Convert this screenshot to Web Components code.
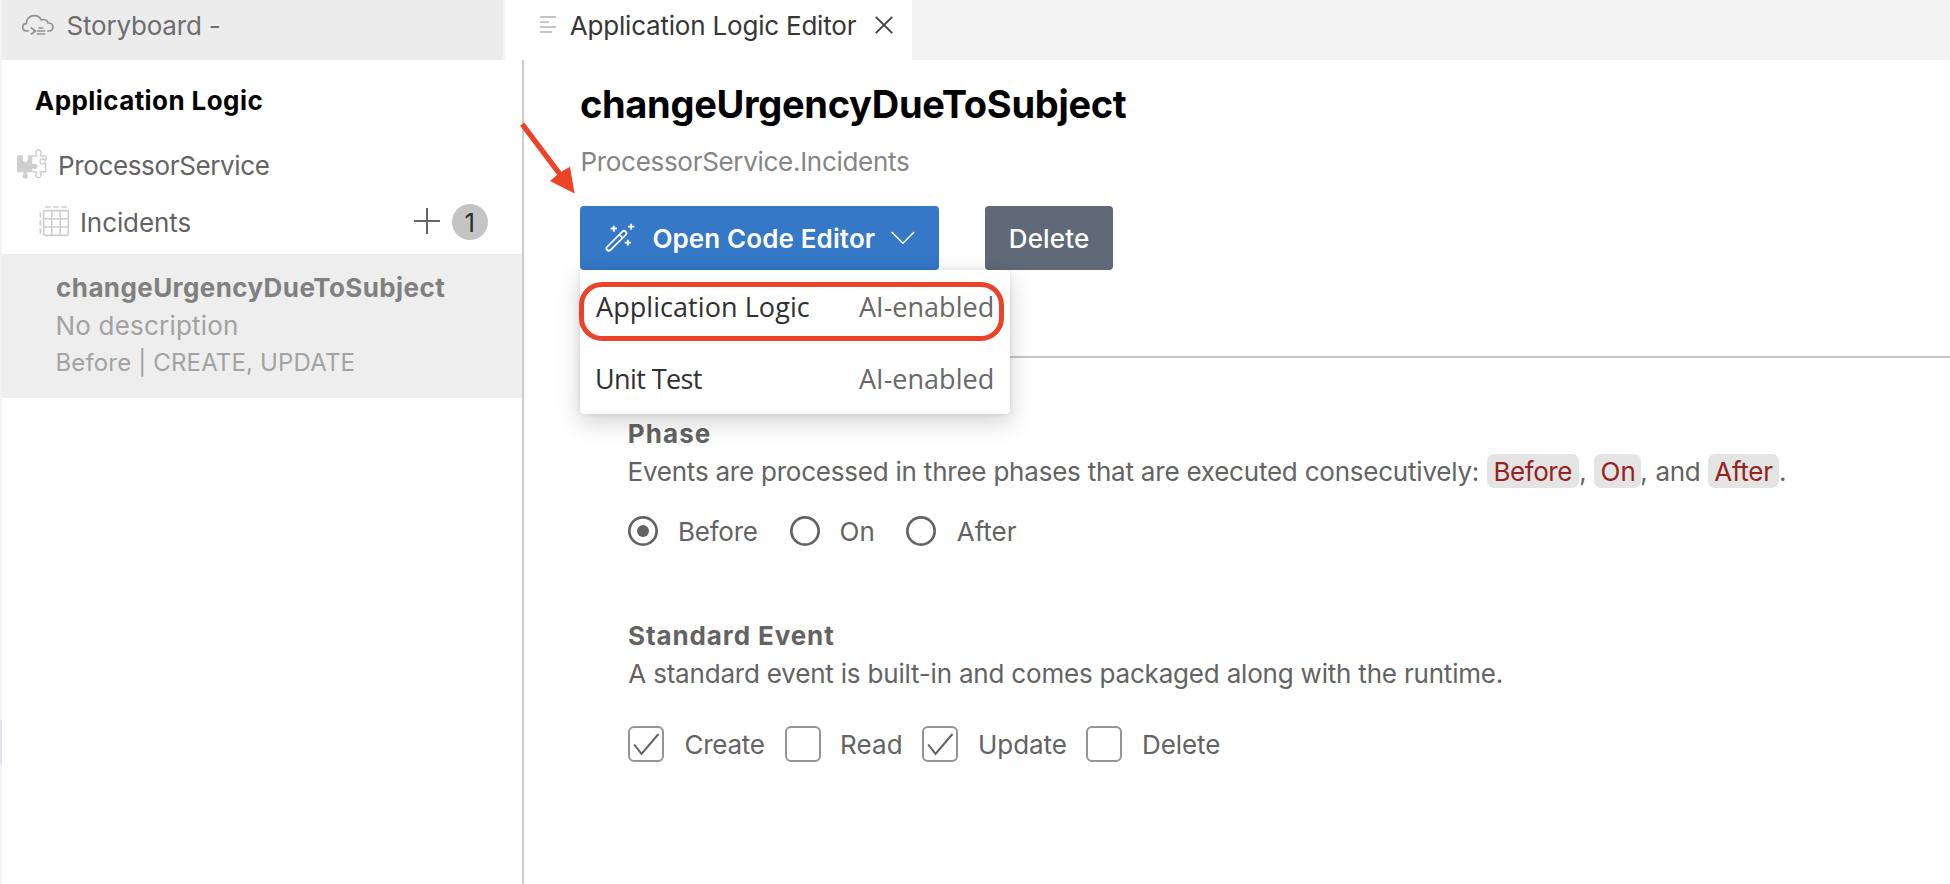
<!DOCTYPE html>
<html lang="en">
<head>
<meta charset="utf-8">
<title>Application Logic Editor</title>
<style>
html, body { margin: 0; height: 100%; overflow: hidden; background: #fff; }
body { font-family: Inter, "Liberation Sans", sans-serif; color: #636363; }
</style>
</head>
<body>
<app-shell></app-shell>
<script>
const define = (name, markup, setup) => customElements.define(name, class extends HTMLElement {
  constructor() {
    super();
    this.attachShadow({ mode: "open" }).innerHTML = markup;
  }
  connectedCallback() { if (setup) setup(this, this.shadowRoot); }
});

/* Text whose box is its ink: w = width, size, weight, face, lh */
const pen = document.createElement("canvas").getContext("2d");
define("ui-text", `<style>
  :host { display: block; flex: none; white-space: pre; }
  span { display: inline-block; vertical-align: top; font-optical-sizing: none; font-variation-settings: "opsz" 14; }
</style><span><slot></slot></span>`, (el, root) => {
  const size = +(el.getAttribute("size") || 26);
  const weight = el.getAttribute("weight") || 430;
  const face = el.getAttribute("face") || "Inter";
  const lh = el.getAttribute("lh") || 30;
  const width = +el.getAttribute("w");
  const text = el.textContent;
  const span = root.querySelector("span");
  el.style.cssText = `width:${width}px;height:${lh}px;font:${weight} ${size}px/${lh}px "${face}",sans-serif;` + (el.getAttribute("style") || "");
  pen.font = `${Math.round(weight / 100) * 100} ${size * 10}px "${face}"`;
  const first = pen.measureText(text[0]);
  const last = pen.measureText(text[text.length - 1]);
  const left = -first.actualBoundingBoxLeft / 20;
  const right = (last.width - last.actualBoundingBoxRight) / 10;
  const natural = span.getBoundingClientRect().width;
  span.style.marginLeft = -left + "px";
  if (text.length > 1) span.style.letterSpacing = (width + left + right - natural) / (text.length - 1) + "px";
});

define("cloud-icon", `<style>:host{display:block;width:34px;height:22px;color:#929292}svg{display:block}</style>
<svg width="34" height="22" viewBox="63 42 102 66" fill="none" stroke="currentColor" stroke-width="5" stroke-linecap="round" stroke-linejoin="round">
<path d="M85 93h-3C73 93 68 88 68 82c0-7 5-11 11-11 0-14 10-24 24-24 11 0 18 6 21 13 9-4 18 1 20 9 9 0 15 5 15 12 0 8-6 12-13 12h-3"/>
<path d="M94 84l12 9-12 9M117 84h11M112 93h22M112 102h22"/></svg>`);

define("lines-icon", `<style>:host{display:block;width:16px;height:18px}svg{display:block}</style>
<svg width="16" height="18" fill="#c5c5c5"><path d="M0 0h16v2H0zM0 5h9v2H0zM0 10h16v2H0zM0 15h12v2H0z"/></svg>`);

define("close-icon", `<style>:host{display:block;width:18px;height:18px}svg{display:block}</style>
<svg width="18" height="18" fill="none" stroke="#424242" stroke-width="1.9"><path d="M.8.8l16.4 16.4M17.2.8L.8 17.2"/></svg>`);

define("puzzle-icon", `<style>:host{display:block;width:32px;height:32px}svg{display:block}</style>
<svg width="32" height="32" viewBox="48 446 96 96" fill="none" stroke="#cfcfcf" stroke-width="4.5" stroke-linejoin="round">
<path fill="#cfcfcf" stroke="none" d="M54 468h12c3 0 4 2 3 5-3 8 1 15 7 15s10-7 7-15c-1-3 0-5 3-5h11v27c6-4 16-2 16 6s-10 10-16 6v12H83c-3 0-3 3-1 5 4 5 1 14-6 14s-11-8-6-14c2-3 1-5-2-5H54c-2 0-3-1-3-3v-45c0-2 1-3 3-3z"/>
<path d="M97 470h11c3 0 3-3 1-6-4-6 0-13 6-13s11 7 7 13c-2 3-1 6 2 6h14v13c-2 2-4 1-5-2-5-5-13-2-13 5s7 10 12 6c3-3 5-2 5 2v23h-14c-3 0-3 3-1 6 3 6-1 12-7 12s-10-7-6-13c2-3 1-5-2-5H97"/></svg>`);

define("table-icon", `<style>:host{display:block;width:32px;height:32px}svg{display:block}</style>
<svg width="32" height="32" viewBox="114 616 96 96" fill="none" stroke="#cdcdcd" stroke-width="5">
<rect x="131" y="633" width="74" height="74" rx="3"/><path stroke-width="4.5" d="M155.500 633v74M180.500 633v74M131 657.500h74M131 682h74"/>
<path stroke-linecap="round" d="M137 622h13M161 622h13M186 622h13M121 640v13M121 663v13M121 687v13"/></svg>`);

define("wand-icon", `<style>:host{display:block;width:30px;height:30px}svg{display:block}</style>
<svg width="30" height="30" viewBox="285 340 90 90" fill="none" stroke="#fff" stroke-width="5.500">
<path stroke-width="5.200" d="M291 412l46-46c7-7 17 3 10 10l-46 45c-7 6-16-3-10-9zM328 375l10 10"/>
<path d="M302 356.500h19M311.500 348v18M354 351h19M363.500 342v18M344 399h19M353.500 390v18"/></svg>`);

define("plus-icon", `<style>:host{display:block;width:26px;height:26px}svg{display:block}</style>
<svg width="26" height="26" fill="#666"><path d="M12 0h2v26h-2zM0 12h26v2H0z"/></svg>`);

define("tab-bar", `<style>
  :host { display: flex; height: 60px; background: #f3f3f3; }
  .tab { display: flex; box-sizing: border-box; height: 60px; }
  .story { width: 501px; margin: 0 2px 0 2px; background: #ececec; padding: 11px 0 0 19px; color: #6d6d6d; }
  .story ui-text { margin-left: 12px; }
  cloud-icon { margin-top: 3px; }
  .editor { width: 407px; background: #fff; padding: 11px 0 0 35px; color: #363636; }
  .editor ui-text { margin: 0 20px 0 14px; }
  lines-icon { margin-top: 5px; }
  close-icon { margin-top: 5px; margin-left: -1px; }
</style>
<div class="tab story"><cloud-icon></cloud-icon><ui-text w="152">Storyboard -</ui-text></div>
<div class="tab editor"><lines-icon></lines-icon><ui-text w="286">Application Logic Editor</ui-text><close-icon></close-icon></div>`);

define("logic-sidebar", `<style>
  :host { display: flex; width: 522px; flex: none; }
  .edge { width: 2px; background: #f3f3f3; padding-top: 660px; box-sizing: border-box; }
  .edge i { display: block; height: 44px; background: #e3e6f2; }
  .list { flex: 1; padding-top: 26px; }
  .row { display: flex; height: 30px; }
  .head { padding-left: 33px; color: #000; }
  .service { margin-top: 35px; padding-left: 14px; }
  .service ui-text { margin-left: 11px; }
  .entity { margin-top: 27px; padding-left: 36px; }
  .entity ui-text { margin-left: 11px; }
  puzzle-icon, table-icon { margin-top: -3px; }
  plus-icon { margin: 0 12px 0 auto; }
  .count { display: flex; justify-content: center; width: 36px; height: 36px; margin: -4px 34px 0 0; border-radius: 50%; background: #c4c4c4; color: #303030; }
  .count ui-text { margin: 4px 0 0; }
  .item { margin-top: 16px; height: 144px; box-sizing: border-box; padding: 19px 0 0 54.500px; background: #eee; color: #a2a2a2; }
  .item ui-text + ui-text { margin-top: 8px; }
  .item ui-text:last-child { margin-top: 7px; }
  .name { color: #808080; }
</style>
<div class="edge"><i></i></div>
<div class="list">
  <div class="row head"><ui-text weight="700" w="227">Application Logic</ui-text></div>
  <div class="row service"><puzzle-icon></puzzle-icon><ui-text w="210">ProcessorService</ui-text></div>
  <div class="row entity"><table-icon></table-icon><ui-text w="109">Incidents</ui-text><plus-icon></plus-icon><div class="count"><ui-text w="10">1</ui-text></div></div>
  <div class="item"><ui-text class="name" weight="700" w="388">changeUrgencyDueToSubject</ui-text><ui-text w="180">No description</ui-text><ui-text size="24" w="297">Before | CREATE, UPDATE</ui-text></div>
</div>`);

define("code-menu", `<style>
  :host { position: absolute; left: 0; top: 64px; width: 430px; height: 144px; background: #fff; border-radius: 0 4px 4px 4px; box-shadow: 0 0 4px rgba(0,0,0,.1), 0 8px 24px rgba(0,0,0,.19); z-index: 2; }
  .opt { display: flex; justify-content: space-between; height: 72px; box-sizing: border-box; padding: 22px 18px 0 16px; color: #303030; }
  .opt ui-text:last-child { color: #686868; }
  .ring { position: absolute; left: -1px; top: 12px; width: 425px; height: 59px; box-sizing: border-box; border: 5px solid #ec4228; border-radius: 23px; }
</style>
<div class="opt"><ui-text weight="400" face="Open Sans" size="27" w="213">Application Logic</ui-text><ui-text weight="400" face="Open Sans" size="27" w="133">AI-enabled</ui-text></div>
<div class="opt"><ui-text weight="400" face="Open Sans" size="27" w="106">Unit Test</ui-text><ui-text weight="400" face="Open Sans" size="27" w="133">AI-enabled</ui-text></div>
<div class="ring"></div>`);

define("action-bar", `<style>
  :host { display: flex; position: relative; height: 64px; margin-top: 29px; color: #fff; gap: 46px; }
  .btn { display: flex; box-sizing: border-box; height: 64px; border-radius: 4px; padding-top: 18px; }
  .open { width: 359px; background: #3478c6; padding-left: 25px; }
  .open ui-text { margin: 0 17px 0 18px; }
  wand-icon { margin-top: -1px; }
  .open > svg { margin-top: 7px; margin-left: -1px; }
  .delete { width: 128px; background: #5f6978; justify-content: center; }
</style>
<div class="btn open"><wand-icon></wand-icon><ui-text weight="600" w="222">Open Code Editor</ui-text><svg width="24" height="14" fill="none" stroke="#fff" stroke-width="1.600"><path d="M.7 1l11.200 11.200L23.100 1"/></svg></div>
<div class="btn delete"><ui-text weight="500" w="78.500">Delete</ui-text></div>
<code-menu></code-menu>`);

define("radio-dot", `<style>
  :host { display: flex; align-items: center; justify-content: center; width: 30px; height: 30px; box-shadow: inset 0 0 0 2.700px #636363; border-radius: 50%; flex: none; background: #fff; }
  :host([on])::before { content: ""; width: 12px; height: 12px; border-radius: 50%; background: #636363; }
</style>`);

define("check-box", `<style>
  :host { display: block; box-sizing: border-box; width: 36px; height: 36px; border: 2px solid #949494; border-radius: 6px; flex: none; background: #fff; }
  svg { display: none; }
  :host([on]) svg { display: block; }
</style><svg width="32" height="32" fill="none" stroke="#636363" stroke-width="2"><path d="M4.200 16.500l7.300 9.300L28.500 6"/></svg>`);

define("code-chip", `<style>
  :host { display: flex; justify-content: center; box-sizing: border-box; height: 34px; padding-top: 3px; margin-top: -1px; background: #e4e4e4; border-radius: 7px; color: #94221f; flex: none; }
</style><slot></slot>`);

define("logic-editor", `<style>
  :host { display: block; flex: 1; border-left: 2px solid #ccc; padding: 24px 0 0 56px; position: relative; }
  .title { color: #000; margin-left: 0.500px; }
  .sub { color: #858585; margin: 23px 0 0 1.500px; }
  hr { height: 2px; border: 0; margin: 86px 0 0; background: #c5c5c5; }
  .form { padding-left: 48.500px; }
  .phase { margin-top: 61px; }
  .intro { display: flex; height: 34px; margin-top: 6px; }
  .intro > ui-text { margin-top: 2px; }
  .line { display: flex; margin-left: -0.500px; }
  .line ui-text { margin-top: 1px; }
  .radios { margin-top: 27px; height: 30px; }
  .std { margin-top: 75px; }
  .about { margin-top: 8px; }
  .checks { margin-top: 37px; height: 36px; }
  .checks ui-text { margin-top: 4px; }
  .arrow { position: absolute; left: -4px; top: 60px; z-index: 3; }
</style>
<ui-text class="title" weight="700" size="38" lh="40" w="546">changeUrgencyDueToSubject</ui-text>
<ui-text class="sub" w="327">ProcessorService.Incidents</ui-text>
<action-bar></action-bar>
<hr>
<div class="form">
  <ui-text class="phase" weight="700" w="81">Phase</ui-text>
  <div class="intro"><ui-text w="849">Events are processed in three phases that are executed consecutively:</ui-text>
    <code-chip style="width:92px;margin-left:9.5px"><ui-text w="77">Before</ui-text></code-chip><ui-text w="5" style="margin-left:1px">,</ui-text>
    <code-chip style="width:47px;margin-left:9px"><ui-text w="33">On</ui-text></code-chip><ui-text w="5" style="margin-left:0px">,</ui-text>
    <ui-text w="43" style="margin-left:10px">and</ui-text><code-chip style="width:71px;margin-left:9px"><ui-text w="58">After</ui-text></code-chip><ui-text w="4" style="margin-left:1px">.</ui-text></div>
  <div class="line radios">
    <radio-dot on></radio-dot><ui-text w="78" style="margin-left:21px">Before</ui-text>
    <radio-dot style="margin-left:32.5px"></radio-dot><ui-text w="33" style="margin-left:20.5px">On</ui-text>
    <radio-dot style="margin-left:33px"></radio-dot><ui-text w="59" style="margin-left:21px">After</ui-text>
  </div>
  <ui-text class="std" weight="700" w="205">Standard Event</ui-text>
  <ui-text class="about" w="873">A standard event is built-in and comes packaged along with the runtime.</ui-text>
  <div class="line checks">
    <check-box on></check-box><ui-text w="79" style="margin-left:21px">Create</ui-text>
    <check-box style="margin-left:21px"></check-box><ui-text w="60" style="margin-left:20px">Read</ui-text>
    <check-box on style="margin-left:21px"></check-box><ui-text w="87" style="margin-left:21px">Update</ui-text>
    <check-box style="margin-left:20px"></check-box><ui-text w="76.500" style="margin-left:21px">Delete</ui-text>
  </div>
</div>
<svg class="arrow" width="60" height="80" fill="#ec4228"><path d="M.1 5.800L4.300 2.600 41.400 51.700 50 46.700 54.600 73.500 30 61 37.200 54.900z"/></svg>`);

define("app-shell", `<style>
  :host { display: flex; flex-direction: column; height: 884px; width: 1950px; overflow: hidden; }
  main { flex: 1; display: flex; }
</style><tab-bar></tab-bar><main><logic-sidebar></logic-sidebar><logic-editor></logic-editor></main>`);
</script>
</body>
</html>
